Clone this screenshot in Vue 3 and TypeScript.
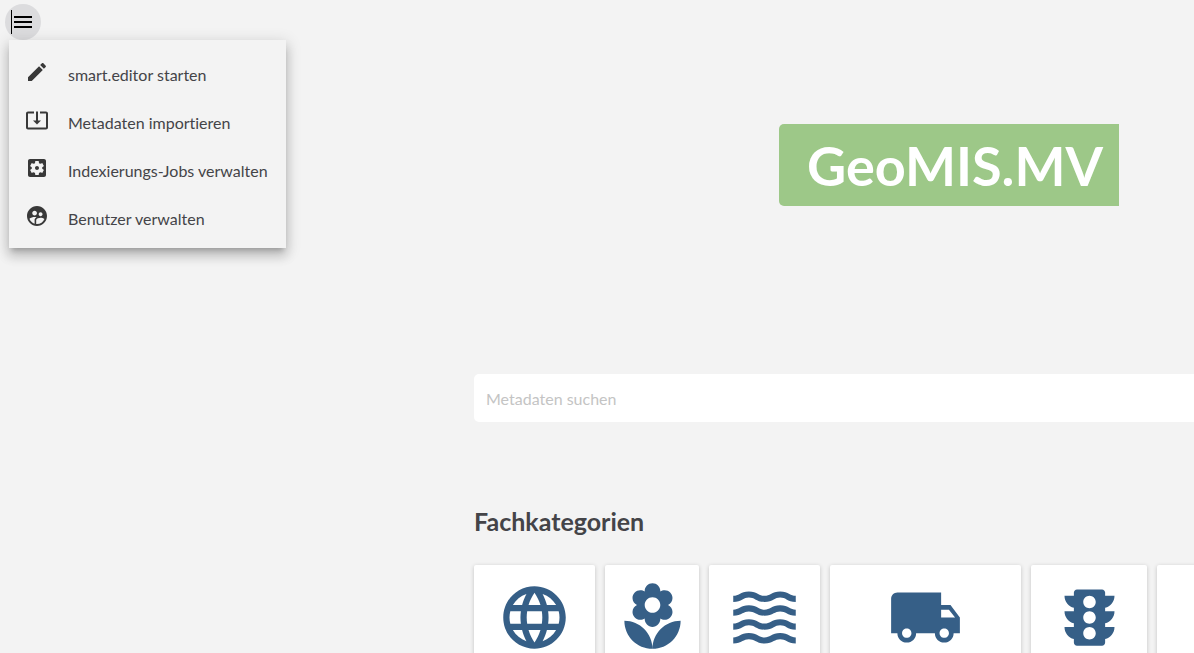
<script setup lang="ts">
import { ref } from 'vue'

interface Entry {
  name: string
  label: string
  paths: string[]
}

const wave =
  'c-1.35 0-2.2.42-2.95.8-.65.33-1.18.6-2.05.6-.9 0-1.4-.25-2.05-.6-.75-.38-1.57-.8-2.95-.8s-2.2.42-2.95.8c-.65.33-1.17.6-2.05.6v1.95c1.35 0 2.2-.42 2.95-.8.65-.33 1.17-.6 2.05-.6s1.4.25 2.05.6c.75.38 1.57.8 2.95.8s2.2-.42 2.95-.8c.65-.33 1.18-.6 2.05-.6.9 0 1.4.25 2.05.6.75.38 1.58.8 2.95.8v-1.95c-.9 0-1.4-.25-2.05-.6-.75-.38-1.6-.8-2.95-.8z'

const menuOpen = ref(true)
const query = ref('')

const menuItems: Entry[] = [
  {
    name: 'edit',
    label: 'smart.editor starten',
    paths: [
      'M3 17.25V21h3.75L17.81 9.94l-3.75-3.75L3 17.25zM20.71 7.04c.39-.39.39-1.02 0-1.41l-2.34-2.34c-.39-.39-1.02-.39-1.41 0l-1.83 1.83 3.75 3.75 1.83-1.83z',
    ],
  },
  {
    name: 'import',
    label: 'Metadaten importieren',
    paths: [
      'M12 16.5l4-4h-3v-9h-2v9H8l4 4zm9-13h-6v1.99h6v14.03H3V5.49h6V3.5H3c-1.1 0-2 .9-2 2v14c0 1.1.9 2 2 2h18c1.1 0 2-.9 2-2v-14c0-1.1-.9-2-2-2z',
    ],
  },
  {
    name: 'jobs',
    label: 'Indexierungs-Jobs verwalten',
    paths: [
      'M12 10c-1.1 0-2 .9-2 2s.9 2 2 2 2-.9 2-2-.9-2-2-2zm7-7H5c-1.11 0-2 .9-2 2v14c0 1.1.89 2 2 2h14c1.11 0 2-.9 2-2V5c0-1.1-.89-2-2-2zm-1.75 9c0 .23-.02.46-.05.68l1.48 1.16c.13.11.17.3.08.45l-1.4 2.42c-.09.15-.27.21-.43.15l-1.74-.7c-.36.28-.76.51-1.18.69l-.26 1.85c-.03.17-.18.3-.35.3h-2.8c-.17 0-.32-.13-.35-.29l-.26-1.85c-.43-.18-.82-.41-1.18-.69l-1.74.7c-.16.06-.34 0-.43-.15l-1.4-2.42c-.09-.15-.05-.34.08-.45l1.48-1.16c-.03-.23-.05-.46-.05-.69 0-.23.02-.46.05-.68l-1.48-1.16c-.13-.11-.17-.3-.08-.45l1.4-2.42c.09-.15.27-.21.43-.15l1.74.7c.36-.28.76-.51 1.18-.69l.26-1.85c.03-.17.18-.3.35-.3h2.8c.17 0 .32.13.35.29l.26 1.85c.43.18.82.41 1.18.69l1.74-.7c.16-.06.34 0 .43.15l1.4 2.42c.09.15.05.34-.08.45l-1.48 1.16c.03.23.05.46.05.69z',
    ],
  },
  {
    name: 'users',
    label: 'Benutzer verwalten',
    paths: [
      'M11.99 2c-5.52 0-10 4.48-10 10s4.48 10 10 10 10-4.48 10-10-4.48-10-10-10zm3.61 6.34c1.07 0 1.93.86 1.93 1.93 0 1.07-.86 1.93-1.93 1.93-1.07 0-1.93-.86-1.93-1.93-.01-1.07.86-1.93 1.93-1.93zm-6-1.58c1.3 0 2.36 1.06 2.36 2.36 0 1.3-1.06 2.36-2.36 2.36s-2.36-1.06-2.36-2.36c0-1.31 1.05-2.36 2.36-2.36zm0 9.13v3.75c-2.4-.75-4.3-2.6-5.14-4.96 1.05-1.12 3.67-1.69 5.14-1.69.53 0 1.2.08 1.9.22-1.64.87-1.9 2.02-1.9 2.68zM11.99 20c-.27 0-.53-.01-.79-.04v-4.07c0-1.42 2.94-2.13 4.4-2.13 1.07 0 2.92.39 3.84 1.15-1.17 2.97-4.06 5.09-7.45 5.09z',
    ],
  },
]

const categories: Entry[] = [
  {
    name: 'regions',
    label: 'Regionen',
    paths: [
      'M11.99 2C6.47 2 2 6.48 2 12s4.47 10 9.99 10C17.52 22 22 17.52 22 12S17.52 2 11.99 2zm6.93 6h-2.95c-.32-1.25-.78-2.45-1.38-3.56 1.84.63 3.37 1.91 4.33 3.56zM12 4.04c.83 1.2 1.48 2.53 1.91 3.96h-3.82c.43-1.43 1.08-2.76 1.91-3.96zM4.26 14C4.1 13.36 4 12.69 4 12s.1-1.36.26-2h3.38c-.08.66-.14 1.32-.14 2 0 .68.06 1.34.14 2H4.26zm.82 2h2.95c.32 1.25.78 2.45 1.38 3.56-1.84-.63-3.37-1.9-4.33-3.56zm2.95-8H5.08c.96-1.66 2.49-2.93 4.33-3.56C8.81 5.55 8.35 6.75 8.03 8zM12 19.96c-.83-1.2-1.48-2.53-1.91-3.96h3.82c-.43 1.43-1.08 2.76-1.91 3.96zM14.34 14H9.66c-.09-.66-.16-1.32-.16-2 0-.68.07-1.35.16-2h4.68c.09.65.16 1.32.16 2 0 .68-.07 1.34-.16 2zm.25 5.56c.6-1.11 1.06-2.31 1.38-3.56h2.95c-.96 1.65-2.49 2.93-4.33 3.56zM16.36 14c.08-.66.14-1.32.14-2 0-.68-.06-1.34-.14-2h3.38c.16.64.26 1.31.26 2s-.1 1.36-.26 2h-3.38z',
    ],
  },
  {
    name: 'nature',
    label: 'Natur',
    paths: [
      'M12 22c4.97 0 9-4.03 9-9-4.97 0-9 4.03-9 9zM5.6 10.25c0 1.38 1.12 2.5 2.5 2.5.53 0 1.01-.16 1.42-.44l-.02.19c0 1.38 1.12 2.5 2.5 2.5s2.5-1.12 2.5-2.5l-.02-.19c.4.28.89.44 1.42.44 1.38 0 2.5-1.12 2.5-2.5 0-1-.59-1.85-1.43-2.25.84-.4 1.43-1.25 1.43-2.25 0-1.38-1.12-2.5-2.5-2.5-.53 0-1.01.16-1.42.44l.02-.19C14.5 2.12 13.38 1 12 1S9.5 2.12 9.5 3.5l.02.19c-.4-.28-.89-.44-1.42-.44-1.38 0-2.5 1.12-2.5 2.5 0 1 .59 1.85 1.43 2.25-.84.4-1.43 1.25-1.43 2.25zM12 5.5c1.38 0 2.5 1.12 2.5 2.5s-1.12 2.5-2.5 2.5S9.5 9.38 9.5 8s1.12-2.5 2.5-2.5zM3 13c0 4.97 4.03 9 9 9 0-4.97-4.03-9-9-9z',
    ],
  },
  {
    name: 'water',
    label: 'Wasser',
    paths: ['M17 16.99' + wave, 'M17 12.54' + wave, 'M17 8.1' + wave, 'M17 3.65' + wave],
  },
  {
    name: 'supply',
    label: 'Versorgung',
    paths: [
      'M20 8h-3V4H3c-1.1 0-2 .9-2 2v11h2c0 1.66 1.34 3 3 3s3-1.34 3-3h6c0 1.66 1.34 3 3 3s3-1.34 3-3h2v-5l-3-4zM6 18.5c-.83 0-1.5-.67-1.5-1.5s.67-1.5 1.5-1.5 1.5.67 1.5 1.5-.67 1.5-1.5 1.5zm13.5-9l1.96 2.5H17V9.5h2.5zm-1.5 9c-.83 0-1.5-.67-1.5-1.5s.67-1.5 1.5-1.5 1.5.67 1.5 1.5-.67 1.5-1.5 1.5z',
    ],
  },
  {
    name: 'traffic',
    label: 'Verkehr',
    paths: [
      'M20 10h-3V8.86c1.72-.45 3-2 3-3.86h-3V4c0-.55-.45-1-1-1H8c-.55 0-1 .45-1 1v1H4c0 1.86 1.28 3.41 3 3.86V10H4c0 1.86 1.28 3.41 3 3.86V15H4c0 1.86 1.28 3.41 3 3.86V20c0 .55.45 1 1 1h8c.55 0 1-.45 1-1v-1.14c1.72-.45 3-2 3-3.86h-3v-1.14c1.72-.45 3-2 3-3.86zm-8 9c-1.11 0-2-.9-2-2s.89-2 2-2c1.1 0 2 .9 2 2s-.89 2-2 2zm0-5c-1.11 0-2-.9-2-2s.89-2 2-2c1.1 0 2 .9 2 2s-.89 2-2 2zm0-5c-1.11 0-2-.9-2-2 0-1.11.89-2 2-2 1.1 0 2 .89 2 2 0 1.1-.89 2-2 2z',
    ],
  },
  { name: 'more', label: 'Weitere', paths: [] },
]
</script>

<template>
  <div class="page">
    <nav class="menu-anchor" aria-label="Hauptmenü">
      <button
        class="menu-toggle"
        type="button"
        aria-label="Menü"
        :aria-expanded="menuOpen"
        @click="menuOpen = !menuOpen"
      >
        <svg class="menu-glyph" viewBox="0 0 24 24" aria-hidden="true">
          <path d="M3 18h18v-2H3v2zm0-5h18v-2H3v2zm0-7v2h18V6H3z" />
        </svg>
      </button>
      <div v-if="menuOpen" class="menu-panel">
        <button v-for="item in menuItems" :key="item.name" class="menu-item" type="button">
          <svg class="item-icon" viewBox="0 0 24 24" aria-hidden="true">
            <path v-for="d in item.paths" :key="d" :d="d" />
          </svg>
          <span>{{ item.label }}</span>
        </button>
      </div>
    </nav>

    <main class="content">
      <h1 class="logo">GeoMIS.MV</h1>
      <input
        v-model="query"
        class="search"
        type="text"
        placeholder="Metadaten suchen"
        aria-label="Metadaten suchen"
      />
      <h2 class="heading">Fachkategorien</h2>
      <div class="cards">
        <a
          v-for="c in categories"
          :key="c.name"
          href="#"
          class="card"
          :class="c.name"
          :aria-label="c.label"
        >
          <svg class="card-icon" viewBox="0 0 24 24" aria-hidden="true">
            <path v-for="d in c.paths" :key="d" :d="d" />
          </svg>
        </a>
      </div>
    </main>
  </div>
</template>

<style>
body {
  margin: 0;
  background: #f3f3f3;
}
</style>

<style scoped>
.page {
  position: relative;
  box-sizing: border-box;
  height: 100vh;
  overflow: hidden;
  background: #f3f3f3;
  color: #444448;
  font-family: Lato, "Liberation Sans", sans-serif;
  font-size: 16px;
  font-variant-ligatures: none;
}

.menu-anchor {
  position: absolute;
  top: 4px;
  left: 5px;
}

.menu-toggle {
  display: flex;
  align-items: center;
  justify-content: center;
  width: 36px;
  height: 36px;
  padding: 0;
  border: 0;
  border-radius: 50%;
  background: #dcdcde;
}

.menu-glyph {
  width: 24px;
  height: 24px;
  fill: #000;
  box-shadow: inset 1px 0 #000;
}

.menu-panel {
  display: flex;
  flex-direction: column;
  margin-left: 4px;
  padding: 8px 0;
  background: #f3f3f3;
  box-shadow:
    0 5px 5px -3px rgba(0, 0, 0, 0.2),
    0 8px 10px 1px rgba(0, 0, 0, 0.14),
    0 3px 14px 2px rgba(0, 0, 0, 0.12);
}

.menu-item {
  display: flex;
  align-items: center;
  gap: 19px;
  height: 48px;
  padding: 0 18px 0 16px;
  border: 0;
  background: none;
  color: inherit;
  font: inherit;
  white-space: nowrap;
}

.menu-item span {
  padding-top: 4px;
}

.item-icon {
  width: 24px;
  height: 24px;
  fill: #383838;
}

.content {
  padding: 124px 0 0 474px;
}

.logo {
  box-sizing: border-box;
  width: fit-content;
  height: 82px;
  margin: 0 0 168px 305px;
  padding: 0 16px 0 28px;
  border-radius: 5px 0 0 5px;
  background: #9dc888;
  color: #fff;
  font-size: 54px;
  font-weight: 700;
  line-height: 84px;
}

.search {
  display: block;
  box-sizing: border-box;
  width: 100%;
  height: 48px;
  padding: 0 12px;
  border: 0;
  border-radius: 5px 0 0 5px;
  outline: 0;
  background: #fff;
  color: inherit;
  font: inherit;
}

.search::placeholder {
  color: #c4c4c4;
  opacity: 1;
}

.heading {
  margin: 84px 0 29px;
  font-size: 25px;
  font-weight: 700;
  line-height: 30px;
}

.cards {
  display: flex;
  gap: 10px;
}

.card {
  display: flex;
  flex: none;
  justify-content: center;
  box-sizing: border-box;
  height: 140px;
  padding-top: 15px;
  border-radius: 2px;
  background: #fff;
  box-shadow: 0 1px 4px rgba(0, 0, 0, 0.2);
}

.card-icon {
  width: 75px;
  height: 75px;
  fill: #365f87;
}

.regions {
  width: 121px;
}

.nature {
  width: 94px;
}

.water {
  width: 111px;
}

.supply {
  width: 191px;
}

.traffic {
  width: 116px;
}

.more {
  width: 160px;
}
</style>
